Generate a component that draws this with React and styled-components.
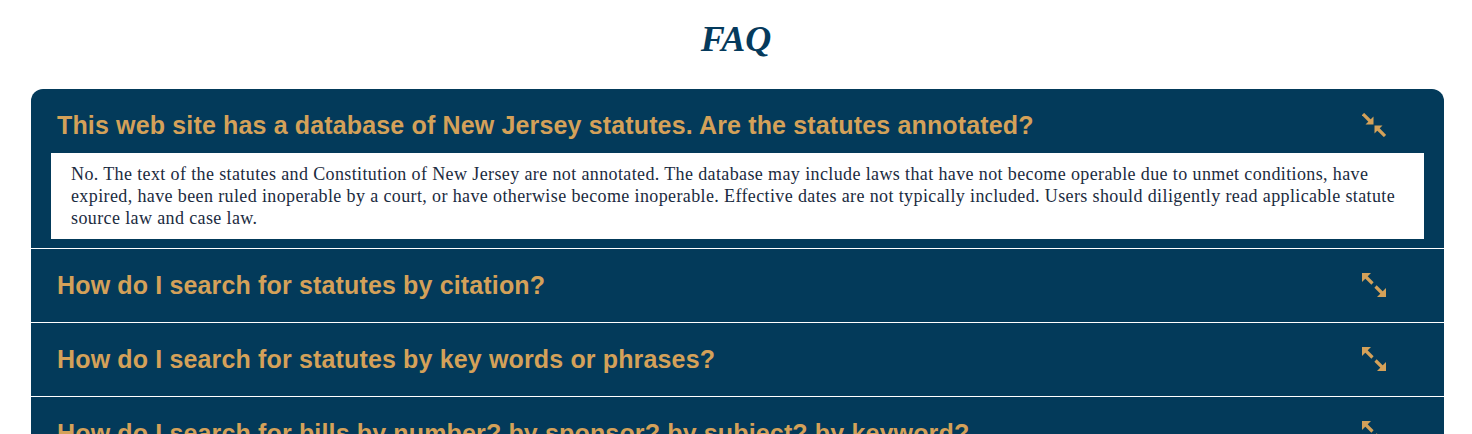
import React, { useState } from 'react';
import styled, { createGlobalStyle } from 'styled-components';

const GlobalStyle = createGlobalStyle`
  html, body {
    margin: 0;
    padding: 0;
    background: #ffffff;
    overflow: hidden;
  }
  body {
    font-family: "Liberation Serif", "Times New Roman", serif;
  }
`;

const NAVY = '#033a5a';
const GOLD = '#d4a159';

const Page = styled.div`
  display: flex;
  flex-direction: column;
  align-items: stretch;
`;

const Title = styled.h1`
  margin: 18px 0 29px;
  text-align: center;
  font-family: "Liberation Serif", "Times New Roman", serif;
  font-style: italic;
  font-weight: 700;
  font-size: 36px;
  line-height: normal;
  color: #053a5c;
`;

const Accordion = styled.div`
  margin: 0 28px 0 31px;
  background: ${NAVY};
  border-radius: 12px 12px 0 0;
  overflow: hidden;
`;

const Item = styled.div`
  display: flex;
  flex-direction: column;
  padding-bottom: ${p => (p.open ? '9px' : '0')};
  & + & {
    border-top: 1px solid #ffffff;
  }
`;

const Header = styled.button`
  display: flex;
  align-items: center;
  justify-content: space-between;
  width: 100%;
  margin: 0;
  border: 0;
  background: transparent;
  cursor: pointer;
  text-align: left;
  padding: 20px 58px ${p => (p.open ? '11px' : '20px')} 26px;
`;

const Question = styled.span`
  font-family: "Liberation Sans", Arial, sans-serif;
  font-weight: 700;
  font-size: 25px;
  letter-spacing: 0.15px;
  line-height: 33px;
  color: ${GOLD};
`;

const Answer = styled.div`
  margin: 0 20px;
  padding: 10px 20px;
  background: #ffffff;
  font-family: "Liberation Serif", "Times New Roman", serif;
  font-size: 18px;
  letter-spacing: 0.38px;
  line-height: 22px;
  color: #1b2b40;
`;

const IconBox = styled.svg`
  flex: none;
  width: 24px;
  height: 24px;
  margin-top: -2px;
`;

const ExpandIcon = () => (
  <IconBox viewBox="0 0 24 24">
    <polygon points="0,0 9,0 0,9" fill={GOLD} />
    <line x1="2" y1="2" x2="10.5" y2="10.5" stroke={GOLD} strokeWidth="3.2" />
    <line x1="13.5" y1="13.5" x2="22" y2="22" stroke={GOLD} strokeWidth="3.2" />
    <polygon points="24,24 15,24 24,15" fill={GOLD} />
  </IconBox>
);

const CollapseIcon = () => (
  <IconBox viewBox="0 0 24 24">
    <line x1="1" y1="1" x2="8" y2="8" stroke={GOLD} strokeWidth="3.2" />
    <polygon points="11.5,11.5 11.5,3.5 3.5,11.5" fill={GOLD} />
    <polygon points="12.5,12.5 12.5,20.5 20.5,12.5" fill={GOLD} />
    <line x1="16" y1="16" x2="23" y2="23" stroke={GOLD} strokeWidth="3.2" />
  </IconBox>
);

const faqs = [
  {
    q: 'This web site has a database of New Jersey statutes. Are the statutes annotated?',
    a: 'No. The text of the statutes and Constitution of New Jersey are not annotated. The database may include laws that have not become operable due to unmet conditions, have expired, have been ruled inoperable by a court, or have otherwise become inoperable. Effective dates are not typically included. Users should diligently read applicable statute source law and case law.',
  },
  { q: 'How do I search for statutes by citation?', a: '' },
  { q: 'How do I search for statutes by key words or phrases?', a: '' },
  { q: 'How do I search for bills by number? by sponsor? by subject? by keyword?', a: '' },
  { q: 'How do I find the status of a bill?', a: '' },
];

const App = () => {
  const [openIndex, setOpenIndex] = useState(0);

  return (
    <Page>
      <GlobalStyle />
      <Title>FAQ</Title>
      <Accordion>
        {faqs.map((item, i) => {
          const open = i === openIndex;
          return (
            <Item key={item.q} open={open}>
              <Header open={open} onClick={() => setOpenIndex(open ? -1 : i)}>
                <Question>{item.q}</Question>
                {open ? <CollapseIcon /> : <ExpandIcon />}
              </Header>
              {open ? <Answer>{item.a}</Answer> : null}
            </Item>
          );
        })}
      </Accordion>
    </Page>
  );
};

export default App;
